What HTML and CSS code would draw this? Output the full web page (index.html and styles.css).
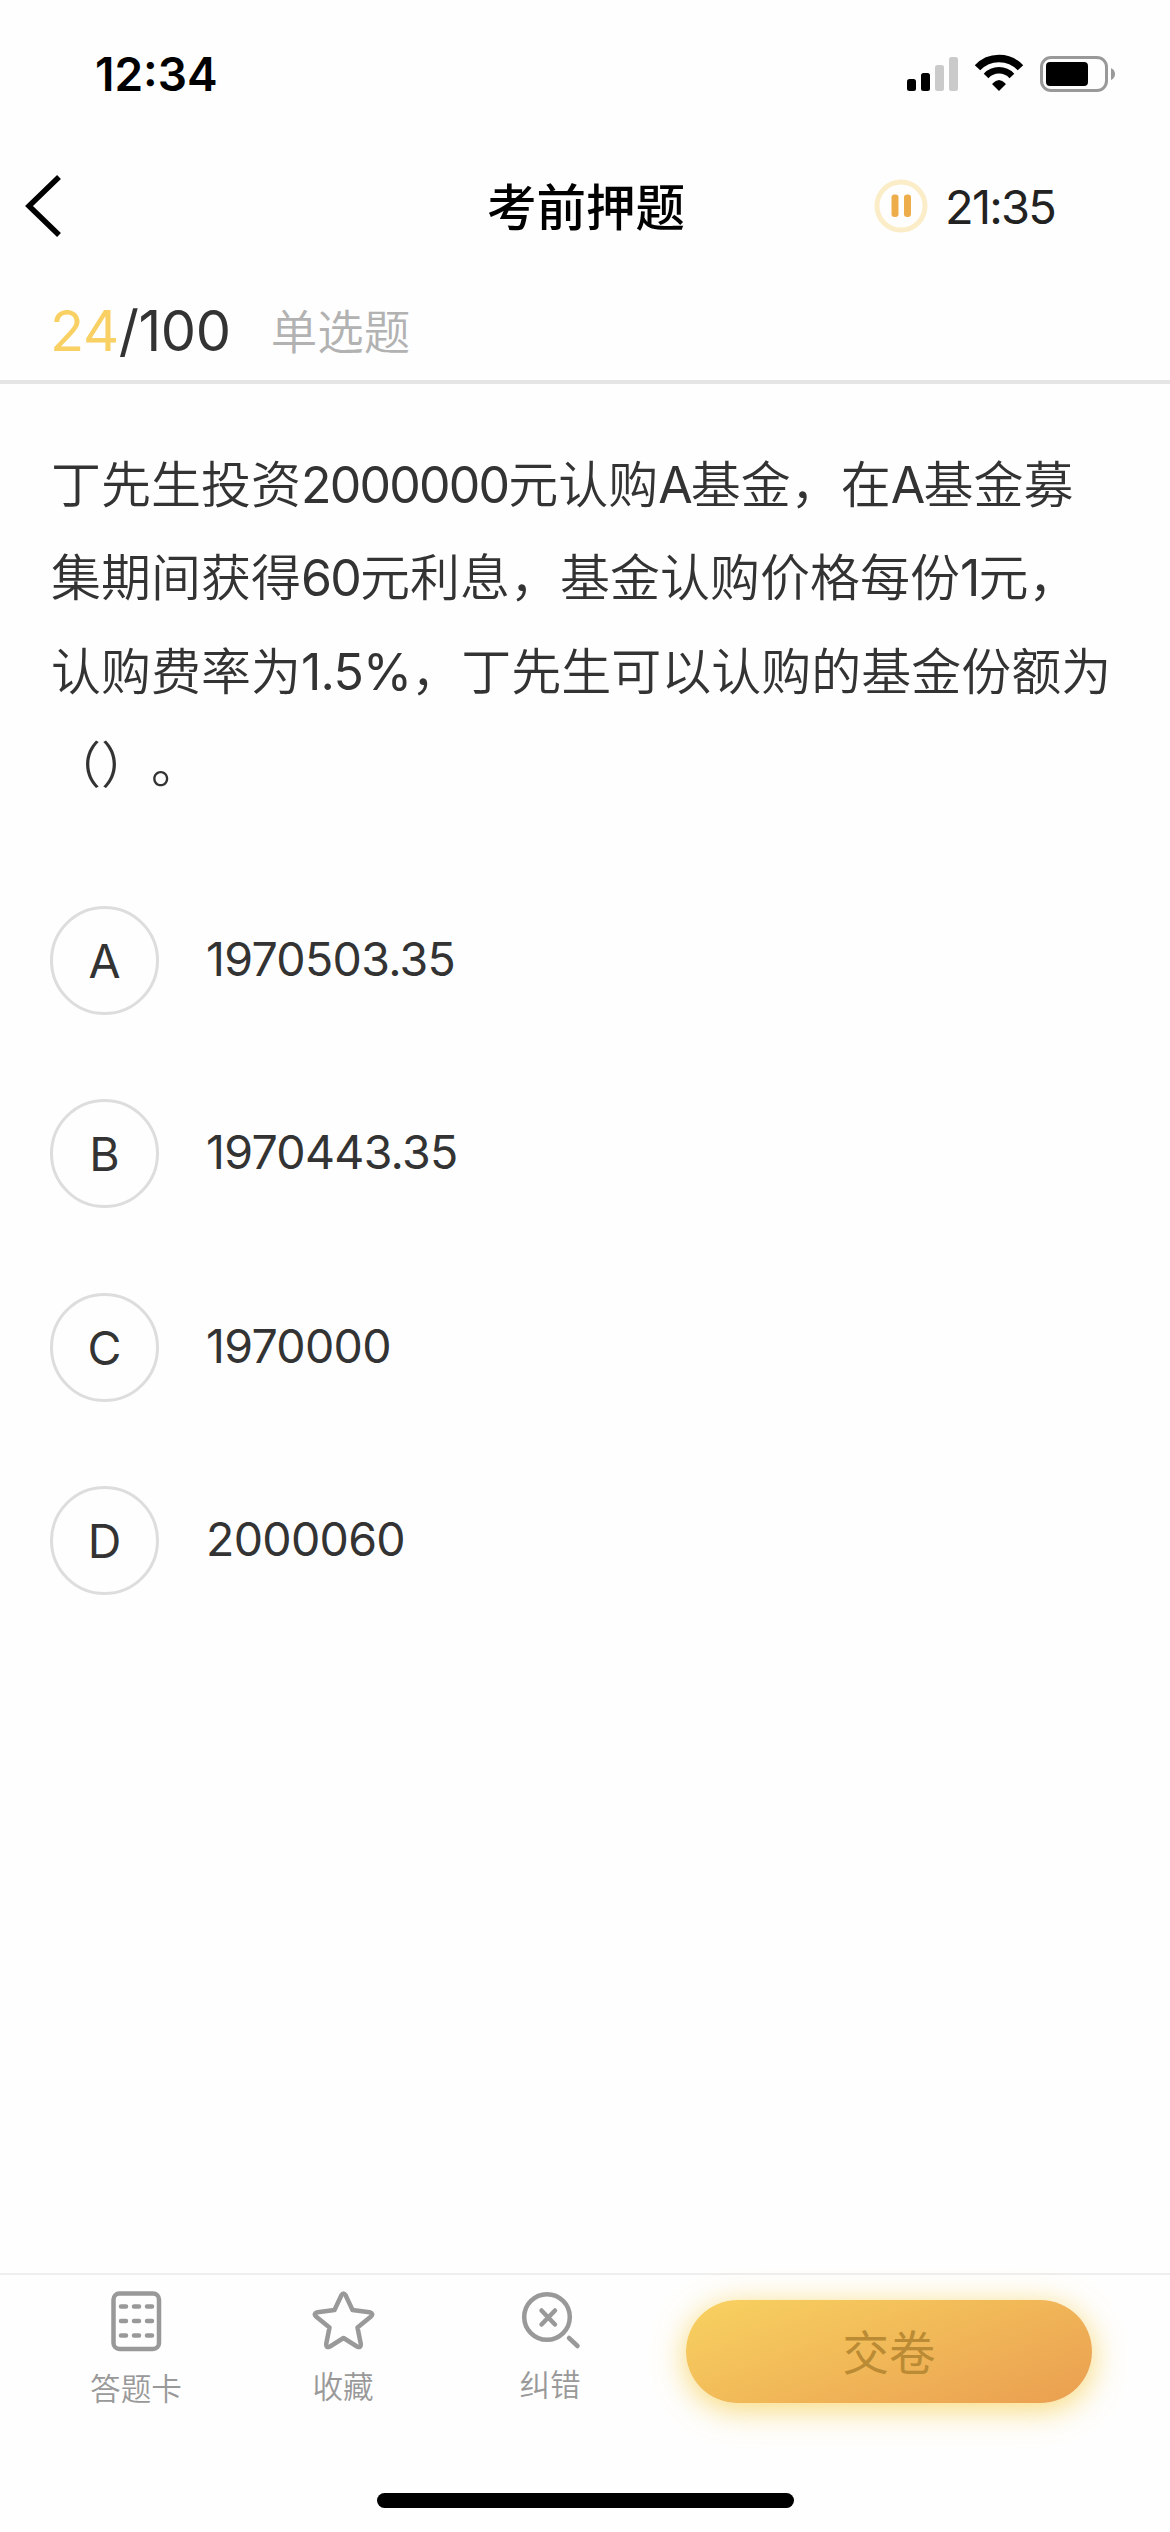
FILE: index.html
```html
<!DOCTYPE html>
<html lang="zh-CN">
  <head>
    <meta charset="UTF-8" />
    <meta name="viewport" content="width=device-width, initial-scale=1.0" />
    <title>考前押题</title>
    <link rel="stylesheet" href="styles.css">
  </head>
  <body>
    <div class="status-bar">
      <div class="clock">12:34</div>
      <svg class="status-icons" width="210" height="40" viewBox="0 0 210 40">
        <!-- signal -->
        <rect x="2" y="25" width="9" height="12" rx="2.500" />
        <rect x="16" y="19" width="9" height="18" rx="2.500" />
        <rect x="30" y="11" width="9" height="26" rx="2.500" fill="#cacaca" />
        <rect x="44" y="3" width="9" height="34" rx="2.500" fill="#cacaca" />
        <!-- wifi -->
        <path d="M72.500 13.800A29.500 29.500 0 0 1 115.500 13.800" fill="none" stroke="#000" stroke-width="7.500" />
        <path d="M81.100 21.900A17.700 17.700 0 0 1 106.900 21.900" fill="none" stroke="#000" stroke-width="6.500" />
        <path d="M94 37L87.500 30.500V29.500Q94 22.500 100.500 29.500V30.500Z" />
        <!-- battery -->
        <rect x="136.500" y="3.500" width="65" height="33" rx="9.500" fill="none" stroke="#999" stroke-width="3" />
        <rect x="141" y="8" width="42" height="24" rx="4" />
        <path d="M206 14q4 2 4 6t-4 6z" fill="#999" />
      </svg>
    </div>

    <div class="nav">
      <svg class="back" width="40" height="64" viewBox="0 0 40 64">
        <path d="M38 3L8 32L38 61" fill="none" stroke="#000" stroke-width="5.500" />
      </svg>
      <h1 class="nav-title">考前押题</h1>
      <div class="timer">
        <svg width="54" height="54" viewBox="0 0 54 54">
          <circle cx="27" cy="27" r="24" fill="none" stroke="#fbedc8" stroke-width="5" />
          <rect x="17.500" y="15.500" width="7" height="22.500" rx="3" fill="#edad4a" />
          <rect x="30" y="15.500" width="7" height="22.500" rx="3" fill="#edad4a" />
        </svg>
        <span class="time">21:35</span>
      </div>
    </div>

    <div class="progress">
      <div class="count"><span class="current">24</span>/100</div>
      <div class="type">单选题</div>
    </div>

    <div class="question">
      丁先生投资<span class="num">2000000</span>元认购<span class="num">A</span>基金，在<span class="num">A</span>基金募<br>
      集期间获得<span class="num">60</span>元利息，基金认购价格每份<span class="num">1</span>元，<br>
      认购费率为<span class="num rate">1.5%</span>，丁先生可以认购的基金份额为<br>
      （）。
    </div>

    <div class="options">
      <div class="option"><span class="letter">A</span><span class="answer">1970503.35</span></div>
      <div class="option"><span class="letter">B</span><span class="answer">1970443.35</span></div>
      <div class="option"><span class="letter">C</span><span class="answer">1970000</span></div>
      <div class="option"><span class="letter">D</span><span class="answer">2000060</span></div>
    </div>

    <div class="toolbar">
      <div class="tool tool-card">
        <svg width="64" height="64" viewBox="0 0 64 64" fill="none" stroke="#999" stroke-width="4.500">
          <rect x="9.500" y="4.500" width="45.500" height="55.500" rx="6" />
          <path d="M17 17.500h5M30 17.500h5M43 17.500h5M17 32h5M30 32h5M43 32h5M17 46.500h5M30 46.500h5M43 46.500h5" stroke-linecap="round" />
        </svg>
        <span>答题卡</span>
      </div>
      <div class="tool tool-star">
        <svg width="64" height="64" viewBox="0 0 64 64" fill="none" stroke="#999">
          <path d="M30.500 6Q32.500 3 34.500 6L41.500 21L58.500 23.200Q63 24.500 60 27.500L46.500 38.500L49.800 55Q50 59.500 46 57.500L32.500 49L19 57.500Q15 59.500 15.200 55L18.500 38.500L5 27.500Q2 24.500 6.500 23.200L23.500 21Z" stroke-width="4.500" stroke-linejoin="round" />
        </svg>
        <span>收藏</span>
      </div>
      <div class="tool tool-error">
        <svg width="64" height="64" viewBox="0 0 64 64" fill="none" stroke="#999" stroke-width="4.500" stroke-linecap="round">
          <circle cx="29" cy="28" r="22.800" />
          <path d="M23.500 21.500L37 35.500M37 21.500L23.500 35.500M51 49L59.500 57" />
        </svg>
        <span>纠错</span>
      </div>
      <div class="submit">交卷</div>
    </div>

    <div class="home-bar"></div>
  </body>
</html>
```
FILE: styles.css
```css
* {
  box-sizing: border-box;
}
body {
  width: 1170px;
  height: 2532px;
  margin: 0;
  display: flex;
  flex-direction: column;
  font-family: Inter, "Noto Sans CJK SC", sans-serif;
  background-color: #fefefe;
  color: #333;
}
/* 状态栏 */
.status-bar {
  height: 132px;
  padding: 54px 55px 0 95px;
  display: flex;
  justify-content: space-between;
  color: #000;
}
.clock {
  font-size: 46px;
  line-height: 41px;
  font-weight: 600;
}
/* 导航栏 */
.nav {
  height: 148px;
  padding: 0 115px 0 21px;
  display: grid;
  grid-template-columns: 466px 1fr auto;
  align-items: center;
}
.nav-title {
  margin: 0;
  padding-top: 3px;
  font-size: 49.5px;
  line-height: 60px;
  font-weight: 500;
  color: #000;
}
.timer {
  display: flex;
  align-items: center;
  gap: 17px;
}
.time {
  font-size: 47px;
  font-weight: 400;
  letter-spacing: -1.8px;
  color: #222;
}
/* 答题进度 */
.progress {
  height: 104px;
  padding: 0 50px;
  display: flex;
  align-items: center;
  gap: 40px;
  border-bottom: 4px solid #e5e5e5;
}
.count {
  padding-top: 2px;
  font-size: 56px;
  font-weight: 400;
  letter-spacing: -0.4px;
}
.current {
  color: #f8d064;
}
.type {
  padding-bottom: 4px;
  font-size: 46.5px;
  font-weight: 350;
  color: #b2b2b2;
}
/* 题目 */
.question {
  padding: 55px 0 0 51px;
  font-size: 50px;
  line-height: 93.3px;
  font-weight: 350;
  white-space: nowrap;
  text-spacing-trim: space-all;
}
.num {
  font-weight: 400;
  letter-spacing: -1.8px;
}
.rate {
  letter-spacing: -0.8px;
}
/* 选项 */
.options {
  padding: 94px 50px 0;
  display: flex;
  flex-direction: column;
  gap: 84.3px;
}
.option {
  height: 109px;
  display: flex;
  align-items: center;
  gap: 47px;
  font-size: 46.5px;
  font-weight: 400;
}
.letter {
  width: 109px;
  height: 109px;
  border: 3px solid #ddd;
  border-radius: 50%;
  line-height: 105px;
  text-align: center;
}
.answer {
  padding-bottom: 3px;
  letter-spacing: -0.7px;
}
/* 底部工具栏 */
.toolbar {
  margin-top: auto;
  height: 220px;
  padding: 14px 78px 0 90px;
  display: flex;
  align-items: flex-start;
  border-top: 2px solid #eee;
}
.tool {
  display: flex;
  flex-direction: column;
  align-items: center;
  gap: 14px;
  width: 92px;
  font-size: 30.6px;
  line-height: 44px;
  font-weight: 350;
  color: #999;
}
.tool-star {
  gap: 12px;
  margin-left: 115px;
}
.tool-error {
  gap: 10px;
  margin-left: 115px;
}
.submit {
  width: 406px;
  height: 103px;
  margin: 11px 0 0 auto;
  border-radius: 52px;
  background: linear-gradient(160deg, #f8d260, #ea9e50);
  box-shadow: 0 6px 32px rgba(248, 208, 80, 0.8);
  font-size: 46.5px;
  line-height: 106px;
  text-align: center;
  color: #ba8b34;
}
.home-bar {
  width: 417px;
  height: 15px;
  margin: 0 auto 24px;
  border-radius: 8px;
  background-color: #000;
}
```
